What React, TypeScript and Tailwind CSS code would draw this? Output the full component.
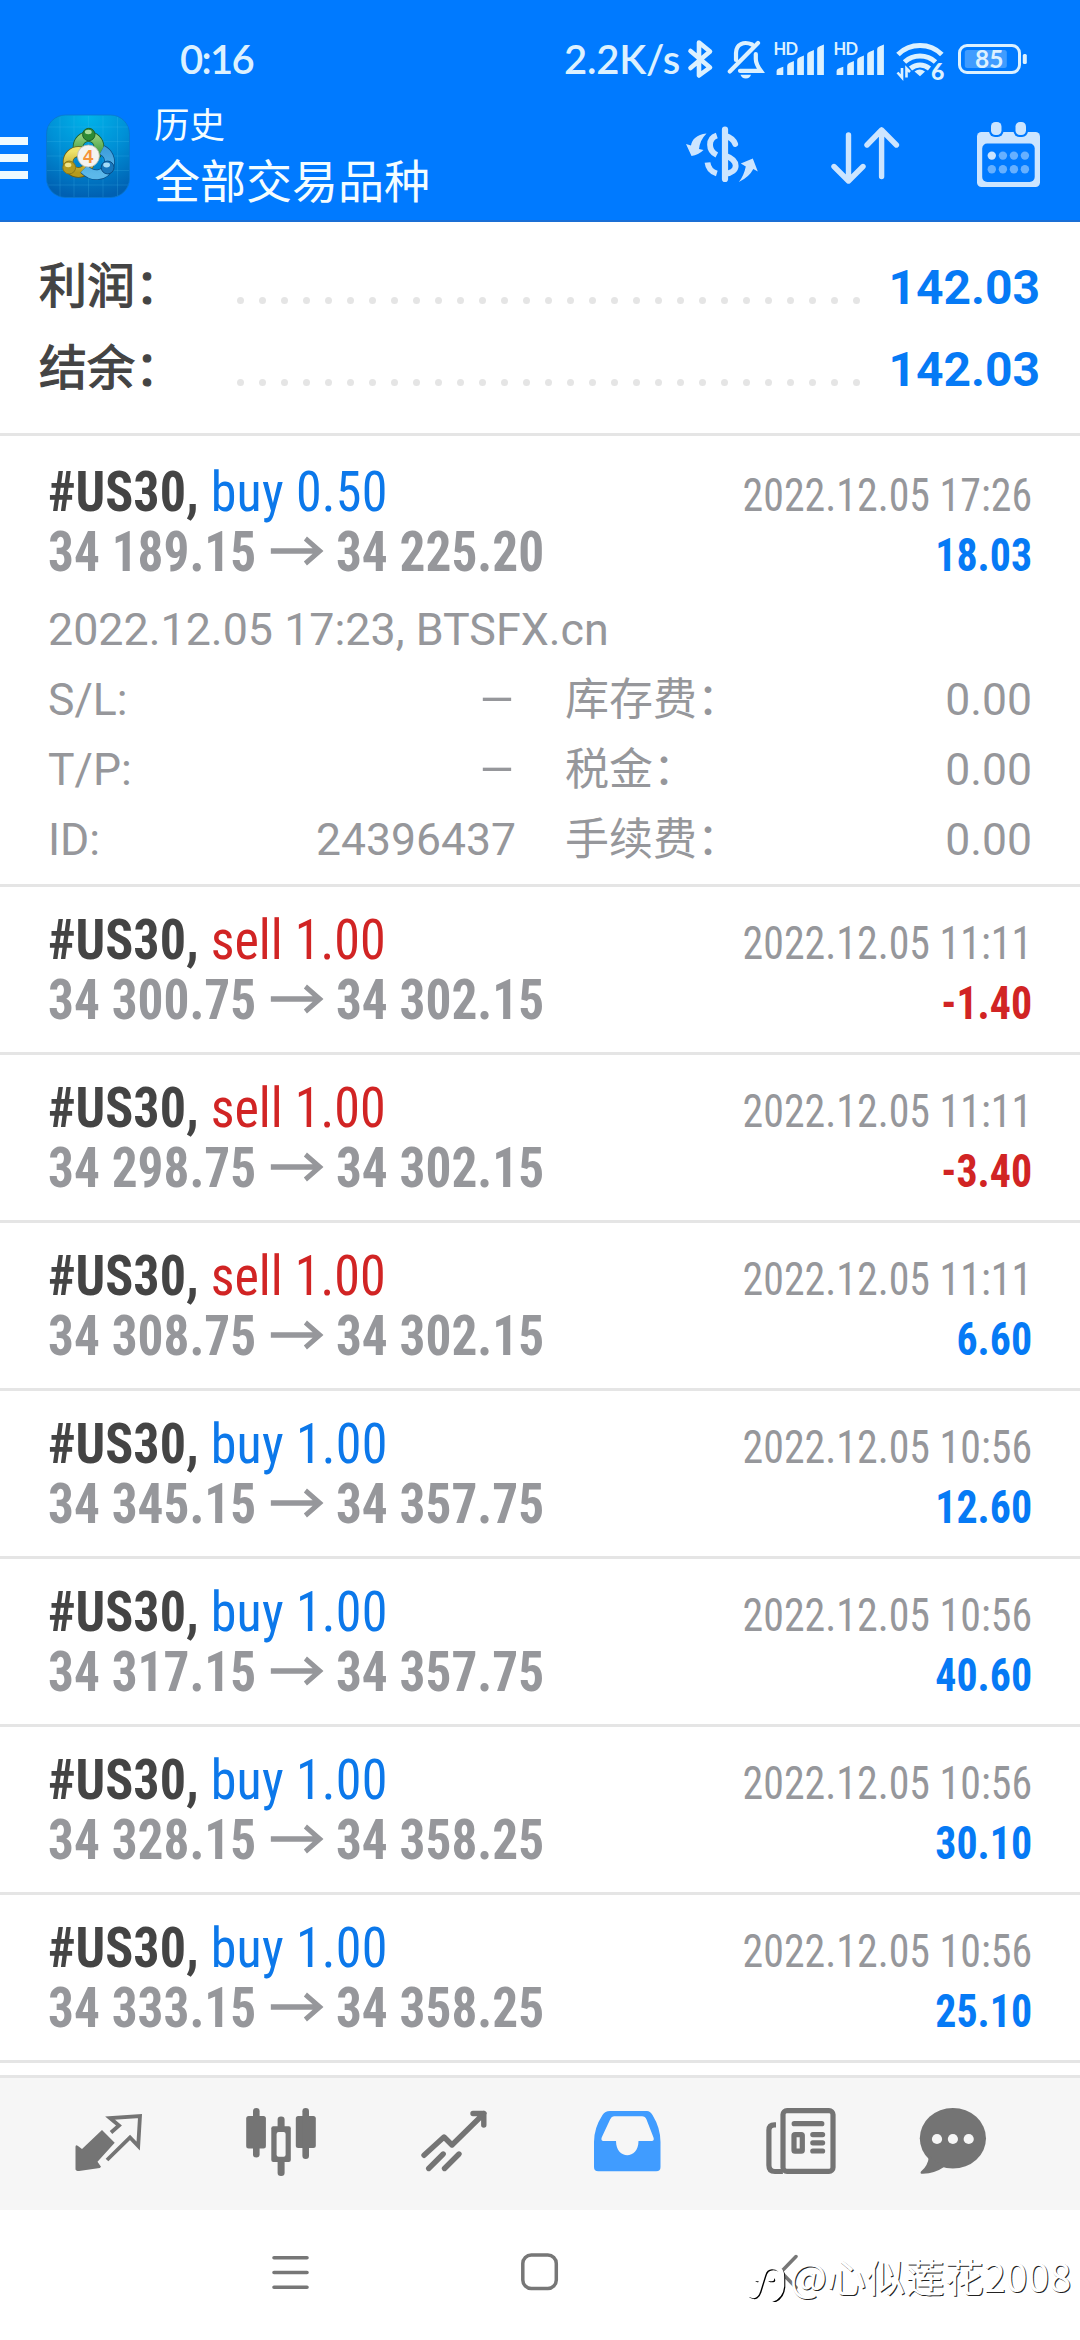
import React from 'react';

interface Deal {
  side: 'buy' | 'sell';
  volume: string;
  open: string;
  close: string;
  time: string;
  profit: string;
}

const deals: Deal[] = [
  { side: 'sell', volume: '1.00', open: '34 300.75', close: '34 302.15', time: '2022.12.05 11:11', profit: '-1.40' },
  { side: 'sell', volume: '1.00', open: '34 298.75', close: '34 302.15', time: '2022.12.05 11:11', profit: '-3.40' },
  { side: 'sell', volume: '1.00', open: '34 308.75', close: '34 302.15', time: '2022.12.05 11:11', profit: '6.60' },
  { side: 'buy', volume: '1.00', open: '34 345.15', close: '34 357.75', time: '2022.12.05 10:56', profit: '12.60' },
  { side: 'buy', volume: '1.00', open: '34 317.15', close: '34 357.75', time: '2022.12.05 10:56', profit: '40.60' },
  { side: 'buy', volume: '1.00', open: '34 328.15', close: '34 358.25', time: '2022.12.05 10:56', profit: '30.10' },
  { side: 'buy', volume: '1.00', open: '34 333.15', close: '34 358.25', time: '2022.12.05 10:56', profit: '25.10' },
];

const details = [
  { left: 'S/L:', leftValue: '–', right: '库存费：', rightValue: '0.00' },
  { left: 'T/P:', leftValue: '–', right: '税金：', rightValue: '0.00' },
  { left: 'ID:', leftValue: '24396437', right: '手续费：', rightValue: '0.00' },
];

const SignalBars: React.FC = () => (
  <svg width="50" height="40" viewBox="774 38 50 40" fill="#dcf1ff" className="overflow-visible">
    <text x="773.5" y="55" fontSize="16.5" fontWeight="700" fontFamily="Lato, sans-serif" textLength="24.5">HD</text>
    <path d="M776.6 75v-4q0-2 2-2.6l4.7-1.6V75zM787.2 75V66q0-2 2-3l4.7-2v14zM797.2 75V60q0-2 2-2.6l4.7-1.8V75zM807.2 75V54.5q0-2 2-2.6l4.7-1.9v25zM817.2 75V49q0-2 2-2.6l4.7-1.9V75z" />
  </svg>
);

const StatusBar: React.FC = () => (
  <div className="flex h-[104px] shrink-0 items-start pt-[36px] text-[#dcf1ff]">
    <div className="ml-[180px] w-[384px] font-['Lato',sans-serif] text-[40px] leading-[46px] font-semibold tracking-[-1.7px]">0:16</div>
    <div className="w-[122px] font-['Lato',sans-serif] text-[40px] leading-[46px] font-semibold tracking-[-0.2px] whitespace-nowrap">2.2K/s</div>
    <svg width="28" height="44" viewBox="686 36 28 44" fill="none" stroke="currentColor" strokeWidth="4.6" strokeLinejoin="round" strokeLinecap="round">
      <path d="M690.5 51 710 67.5 699 75.5V42.5L710 51.5 690.5 68" />
    </svg>
    <svg className="ml-[12px]" width="40" height="44" viewBox="726 36 40 44" fill="none" stroke="currentColor" strokeWidth="4.2" strokeLinecap="round">
      <path d="M729.8 71.5 758 43M736 60V53C736 44 744 41 752 44.5M755.8 54v5q0 5 5 11.8H740" />
      <path d="M740.5 74.8h10.5q-1 3.6-5.2 3.6t-5.3-3.6z" fill="currentColor" stroke="none" />
    </svg>
    <div className="ml-[8px] flex gap-[10px] pt-[2px]">
      <SignalBars />
      <SignalBars />
    </div>
    <svg className="ml-[10px] overflow-visible" width="52" height="50" viewBox="894 36 52 50" fill="none" stroke="currentColor" strokeWidth="5">
      <path d="M898 54.5Q907 45.5 920 45.5T941.8 54.5M904.5 62Q911 56 920 56T935.5 62M910.5 68.5Q915 65 920 65T929.5 68.5" />
      <path d="M914.5 71.5q5-4 10.5 0l-5 4.8z" fill="currentColor" stroke="none" />
      <path d="M902 68v9.5l-4.5-5M906.5 77.5V68.5l3.5 3.5" strokeWidth="2.6" />
      <text x="931" y="79.5" fontSize="23" fontWeight="900" fontFamily="Lato, sans-serif" fill="currentColor" stroke="none">6</text>
    </svg>
    <svg className="ml-[10px]" width="74" height="46" viewBox="956 36 74 46">
      <rect x="959.5" y="45.5" width="60" height="27" rx="7.5" fill="none" stroke="currentColor" strokeWidth="3" />
      <rect x="964.8" y="50" width="42" height="18" rx="2.5" fill="#409cff" />
      <rect x="1022.8" y="54" width="4" height="10" rx="1.5" fill="currentColor" />
      <text x="975" y="68" fontSize="24.5" fontWeight="700" fontFamily="Lato, sans-serif" fill="currentColor">85</text>
    </svg>
  </div>
);

const AppLogo: React.FC = () => (
  <svg width="84" height="84" viewBox="46 114 84 84">
    <defs>
      <radialGradient id="tile" cx="50%" cy="0%" r="100%">
        <stop offset="0" stopColor="#00b4ea" />
        <stop offset="0.5" stopColor="#0090d6" />
        <stop offset="1" stopColor="#0060b2" />
      </radialGradient>
      <linearGradient id="green" x1="0" y1="0" x2="0" y2="1">
        <stop offset="0" stopColor="#8fce78" />
        <stop offset="1" stopColor="#2f8f35" />
      </linearGradient>
      <linearGradient id="gold" x1="0" y1="0" x2="0" y2="1">
        <stop offset="0" stopColor="#efe36a" />
        <stop offset="1" stopColor="#b59a1c" />
      </linearGradient>
      <linearGradient id="sky" x1="0" y1="0" x2="0" y2="1">
        <stop offset="0" stopColor="#3f9fdc" />
        <stop offset="1" stopColor="#5cb8ea" />
      </linearGradient>
    </defs>
    <rect x="46.5" y="115" width="83" height="82.5" rx="19" fill="url(#tile)" stroke="#0a76cc" strokeWidth="0.8" />
    <path d="M60 117v79M74 116v81M88.5 116v81M103 116v81M117.5 117v79M48 127h80M47 141.5h82M47 156h82M47 170.5h82M48 185h80" stroke="#4cc3ee" strokeOpacity="0.2" />
    <g fill="none">
      <circle cx="88.5" cy="147" r="10.5" stroke="#1d5f2a" strokeWidth="10.5" />
      <circle cx="88.5" cy="147" r="10.5" stroke="url(#green)" strokeWidth="9" />
      <circle cx="78.5" cy="162" r="10.5" stroke="#6d5f14" strokeWidth="10.5" />
      <circle cx="78.5" cy="162" r="10.5" stroke="url(#gold)" strokeWidth="9" />
      <path d="M102 150c6 3 9 9 7 16-4 10-16 12-25 3" stroke="#0b4f88" strokeWidth="10.5" />
      <path d="M102 150c6 3 9 9 7 16-4 10-16 12-25 3" stroke="url(#sky)" strokeWidth="9" />
    </g>
    <circle cx="88.8" cy="134.5" r="6.2" fill="#2e8b34" stroke="#1f5f28" />
    <ellipse cx="88.3" cy="132" rx="3.4" ry="2.2" fill="#a9dc9a" />
    <circle cx="69.2" cy="167.5" r="6.4" fill="#b49b20" stroke="#8a781a" />
    <ellipse cx="68.2" cy="165" rx="3.2" ry="2.2" fill="#efe58c" />
    <circle cx="107.6" cy="167.5" r="6.4" fill="#1877bd" stroke="#0b4f88" />
    <ellipse cx="106.6" cy="165" rx="3.4" ry="2.4" fill="#a5dbf7" />
    <circle cx="88.4" cy="156" r="11" fill="#f4f3f1" stroke="#b9b9ae" strokeWidth="0.8" />
    <text x="88.2" y="162.5" fontSize="18.5" fontWeight="700" fontFamily="'Liberation Sans', sans-serif" fill="#f5933a" textAnchor="middle">4</text>
  </svg>
);

const AppBar: React.FC = () => (
  <div className="flex h-[118px] shrink-0 items-start border-b-2 border-[#1a6fd6]">
    <div className="mt-[33px] flex w-[28px] flex-col gap-[9px]">
      <div className="h-[8px] bg-[#eefaff]" />
      <div className="h-[8px] bg-[#eefaff]" />
      <div className="h-[8px] bg-[#eefaff]" />
    </div>
    <div className="mt-[10px] ml-[18px] w-[108px]">
      <AppLogo />
    </div>
    <div className="-mt-[2px] w-[530px] font-['Noto_Sans_CJK_SC',sans-serif] text-[#f4fdff]">
      <div className="text-[35.5px] leading-[42px]">历史</div>
      <div className="mt-[6px] text-[46px] leading-[56px]">全部交易品种</div>
    </div>
    <svg width="76" height="64" viewBox="684 122 76 64" className="mt-[18px]" fill="none" stroke="#cce5ff" strokeWidth="5.8">
      <path d="M725 129.5v49.5" strokeWidth="6.2" strokeLinecap="round" />
      <path d="M725 135.5q8 2.5 10.2 8.5" strokeLinecap="round" />
      <path d="M725 155.5c14.5 5 14 16.5 0 18.5M716.8 135.5c-9 3-9 15 0 19.5M707.5 162.5q1 8.5 9.3 11" />
      <path d="M706.5 133.5c-10 1-14.5 6-15.5 12l-5-1.5 5.5 12q7-1 12-6l-4.5-1q1-9 7.5-15.5zM740.8 163.5l12-5 5 13-4.5-2.5q-4 8-14.5 13 5-6 7-15.5z" fill="#cce5ff" stroke="none" />
    </svg>
    <svg width="72" height="64" viewBox="828 122 72 64" className="mt-[18px] ml-[68px]" fill="none" stroke="#cce5ff" strokeWidth="5.4" strokeLinecap="round" strokeLinejoin="round">
      <path d="M848.5 135v46M834 166.5l14.5 14.5 14.5-14.5M881.6 176.5V130M867 145l14.6-15 14.8 15" />
    </svg>
    <svg width="68" height="70" viewBox="975 120 68 70" className="mt-[16px] ml-[75px]">
      <rect x="977" y="132" width="63" height="55" rx="4.5" fill="#cce5ff" />
      <rect x="982.2" y="143.5" width="52.5" height="38.5" rx="5" fill="#007aff" />
      <rect x="989" y="119.5" width="14.5" height="17.5" rx="6" fill="#007aff" />
      <rect x="1013.5" y="119.5" width="14.5" height="17.5" rx="6" fill="#007aff" />
      <rect x="991" y="122" width="10.5" height="13" rx="4.5" fill="#cce5ff" />
      <rect x="1015.5" y="122" width="10.5" height="13" rx="4.5" fill="#cce5ff" />
      <circle cx="991.8" cy="155.6" r="4.2" fill="#cce5ff" />
      <g fill="#66b0ff">
        <circle cx="1002.9" cy="155.6" r="4.2" />
        <circle cx="1013.9" cy="155.6" r="4.2" />
        <circle cx="1024.9" cy="155.6" r="4.2" />
        <circle cx="991.8" cy="169.3" r="4.2" />
        <circle cx="1002.9" cy="169.3" r="4.2" />
        <circle cx="1013.9" cy="169.3" r="4.2" />
        <circle cx="1024.9" cy="169.3" r="4.2" />
      </g>
    </svg>
  </div>
);

const SummaryRow: React.FC<{ label: string; value: string }> = ({ label, value }) => (
  <div className="flex h-[82px] items-center pr-[40px] pl-[39px]">
    <div className="mb-[6px] w-[198px] font-['Noto_Sans_CJK_SC',sans-serif] text-[48px] leading-[70px] text-[#444] [-webkit-text-stroke:1.2px_#444]">{label}</div>
    <div className="mt-[30px] flex w-[623px] justify-between">
      {Array.from({ length: 29 }, (_, i) => (
        <div key={i} className="size-[7px] rounded-full bg-[#e5e5e5]" />
      ))}
    </div>
    <div className="mt-[5px] flex-1 text-right text-[48px] leading-[60px] font-bold text-[#067af5]">{value}</div>
  </div>
);

// Roboto's condensed cut is still a bit too wide here, so the lines are squeezed a little further
const DealHead: React.FC<{ deal: Deal }> = ({ deal }) => (
  <div className="flex h-[124px] justify-between font-['Roboto_Condensed','Roboto',sans-serif] [font-stretch:75%]">
    <div>
      <div className="origin-left scale-x-93 text-[56px] leading-[62px] whitespace-pre">
        <span className="font-bold text-[#444]">#US30, </span>
        <span className={deal.side === 'buy' ? 'tracking-[0.2px] text-[#0c78ea]' : 'text-[#d12424]'}>
          {deal.side} {deal.volume}
        </span>
      </div>
      <div className="flex origin-left scale-x-[0.916] items-center text-[56px] leading-[58px] font-bold text-[#96979b]">
        <span>{deal.open}</span>
        <svg className="mr-[13px] mb-[3px] ml-[16px]" width="58" height="30" viewBox="0 0 58 30" fill="none" stroke="currentColor" strokeWidth="5.4">
          <path d="M0 15h53M38 2.5l15.5 12.5-15.5 12.5" />
        </svg>
        <span>{deal.close}</span>
      </div>
    </div>
    <div className="origin-right scale-x-91 pt-[4px] text-right text-[46px] leading-[60px]">
      <div className="text-[#96979b]">{deal.time}</div>
      <div className={deal.profit.startsWith('-') ? 'font-bold text-[#d12424]' : 'font-bold text-[#067af5]'}>{deal.profit}</div>
    </div>
  </div>
);

const BottomNav: React.FC = () => (
  <div className="flex h-[135px] shrink-0 items-start border-t-[3px] border-[#e5e5e5] bg-[#f6f6f6] pt-[26px] text-[#747474]">
    <svg width="76" height="76" viewBox="70 2104 76 76" className="ml-[70px]">
      <path d="M75.5 2147q0-3 2.5-1l4 3 20-19 12.7 12.7L97.5 2161.7l3.5 5q-1 1.5-3 1.5l-19 2.8q-3.5 0-3.5-2z" fill="currentColor" />
      <path d="M111 2132.5l8-7-9-7.5 30-2-1.8 30-8.2-8.5-23 22.5" fill="none" stroke="currentColor" strokeWidth="3.8" />
    </svg>
    <svg width="76" height="76" viewBox="243 2104 76 76" className="ml-[97px]" fill="currentColor">
      <rect x="246.2" y="2116" width="19.7" height="32.5" rx="2.5" />
      <rect x="253" y="2108" width="6.6" height="49.5" rx="3.3" />
      <rect x="277.6" y="2116.5" width="7" height="59.5" rx="3.3" />
      <rect x="271.3" y="2126.3" width="19.5" height="35.7" rx="2" />
      <rect x="276.6" y="2132" width="9" height="24.8" rx="2" fill="#f6f6f6" />
      <rect x="295.8" y="2116" width="20" height="32" rx="2.5" />
      <rect x="302.4" y="2108" width="6.6" height="51" rx="3.3" />
    </svg>
    <svg width="76" height="76" viewBox="416 2104 76 76" className="ml-[97px]" fill="none" stroke="currentColor" strokeWidth="5.4" strokeLinecap="round">
      <path d="M424 2155.3l20-18.3 8 8 32-31.5M473 2113.5h10.8V2125" strokeLinejoin="round" />
      <path d="M428.7 2168.5l14.5-14.5M444.5 2168.5l14.5-14.5" />
    </svg>
    <svg width="76" height="76" viewBox="589 2104 76 76" className="ml-[97px]">
      <path fillRule="evenodd" fill="#409cff" d="M610 2111h37q3 0 5.5 4 8 13 8 27v25q0 4.3-4.3 4.3h-57.9q-4.3 0-4.3-4.3v-25q0-14 8.5-27 2.5-4 7.5-4zM614 2116.3q-2.5 0-3.8 3l-8.4 18q-1.3 3.7 1.7 3.7H616c0 19 22.5 19 22.5 0h13.2q3 0 1.7-3.7l-7-18q-1.2-3-4.4-3z" />
    </svg>
    <svg width="76" height="76" viewBox="762 2104 76 76" className="ml-[97px]" fill="none" stroke="currentColor" strokeWidth="5.2">
      <rect x="783" y="2110.6" width="50" height="60.8" rx="4" />
      <path d="M776 2124.8h-1.5q-5.6 0-5.6 5.5v35q0 6.2 6 6.2h8" />
      <path d="M794.2 2123.7h27.6M812.8 2134.6h9.8M812.8 2142.8h9.8M812.8 2151h9.8" strokeLinecap="round" />
      <rect x="794" y="2134.6" width="8.3" height="16.6" rx="1" />
    </svg>
    <svg width="76" height="76" viewBox="915 2104 76 76" className="ml-[77px]" fill="currentColor">
      <ellipse cx="952.9" cy="2138.3" rx="33.1" ry="30.3" />
      <path d="M929 2156q-1 10-8 15.5-1.5 2.5 2 2.3 12-.5 21-6.8z" />
      <g fill="#f6f6f6">
        <circle cx="937" cy="2139" r="5.1" />
        <circle cx="952.9" cy="2139" r="5.1" />
        <circle cx="968.7" cy="2139" r="5.1" />
      </g>
    </svg>
  </div>
);

const SystemNav: React.FC = () => (
  <div className="relative flex h-[130px] shrink-0 items-start bg-white pt-[40px] text-[#777]">
    <svg width="40" height="44" viewBox="270 2250 40 44" className="ml-[270px]" fill="none" stroke="currentColor" strokeWidth="3.6" strokeLinecap="round">
      <path d="M274 2257.7h33M274 2272.5h33M274 2287.3h33" />
    </svg>
    <svg width="42" height="44" viewBox="519 2250 42 44" className="ml-[209px]" fill="none" stroke="currentColor" strokeWidth="3.5">
      <rect x="522.8" y="2255" width="33.5" height="33.5" rx="8.5" />
    </svg>
    <svg width="20" height="44" viewBox="780 2250 20 44" className="ml-[219px]" fill="none" stroke="currentColor" strokeWidth="3.5" strokeLinecap="round">
      <path d="M796 2256.5l-15 15.5 15 15.5" />
    </svg>
    <div className="absolute top-[38px] left-[746px] flex items-center">
      <svg width="44" height="54" viewBox="748 2248 44 54" fill="none" strokeLinecap="round">
        <g stroke="#000" strokeWidth="4" transform="translate(1.3 1.3)">
          <path d="M752 2295q6 3 8-4l5-16q2-8 9-8 10 0 10 10v9q-1 11-11 14M758 2279h5M771 2279h3" />
        </g>
        <g stroke="#fff" strokeWidth="4.5">
          <path d="M752 2295q6 3 8-4l5-16q2-8 9-8 10 0 10 10v9q-1 11-11 14M758 2279h5M771 2279h3" />
        </g>
      </svg>
      <span className="font-['Noto_Sans_CJK_SC',sans-serif] text-[39px] leading-[54px] tracking-[0.2px] whitespace-nowrap text-white [text-shadow:1px_1px_0_#222]">@心似莲花2008</span>
    </div>
  </div>
);

const App: React.FC = () => {
  const first: Deal = { side: 'buy', volume: '0.50', open: '34 189.15', close: '34 225.20', time: '2022.12.05 17:26', profit: '18.03' };

  return (
    <div className="flex h-[2340px] w-[1080px] flex-col overflow-hidden bg-white font-['Roboto',sans-serif]">
      <header className="bg-[#007aff]">
        <StatusBar />
        <AppBar />
      </header>

      {/* Totals */}
      <section className="h-[214px] shrink-0 border-b-[3px] border-[#e5e5e5] pt-[22px]">
        <SummaryRow label="利润：" value="142.03" />
        <SummaryRow label="结余：" value="142.03" />
      </section>

      {/* Expanded deal */}
      <section className="h-[451px] shrink-0 border-b-[3px] border-[#e5e5e5] px-[48px] pt-[25px] text-[#96979b]">
        <DealHead deal={first} />
        <div className="mt-[15px] text-[44.8px] leading-[60px]">2022.12.05 17:23, BTSFX.cn</div>
        <div className="mt-[1px] text-[44.5px]">
          {details.map((d) => (
            <div key={d.left} className="flex h-[70px] items-center">
              <span className="mt-[9px] w-[120px]">{d.left}</span>
              <span className="mt-[9px] w-[348px] text-right">
                {d.leftValue === '–' ? <span className="inline-block origin-right scale-x-130">–</span> : d.leftValue}
              </span>
              <span className="ml-[49px] font-['Noto_Sans_CJK_SC',sans-serif] text-[44px] leading-[70px]">{d.right}</span>
              <span className="mt-[9px] ml-auto">{d.rightValue}</span>
            </div>
          ))}
        </div>
      </section>

      {/* Collapsed deals */}
      {deals.map((deal, i) => (
        <section key={i} className="h-[168px] shrink-0 border-b-[3px] border-[#e5e5e5] px-[48px] pt-[22px]">
          <DealHead deal={deal} />
        </section>
      ))}
      <div className="flex-1" />

      <BottomNav />
      <SystemNav />
    </div>
  );
};

export default App;
